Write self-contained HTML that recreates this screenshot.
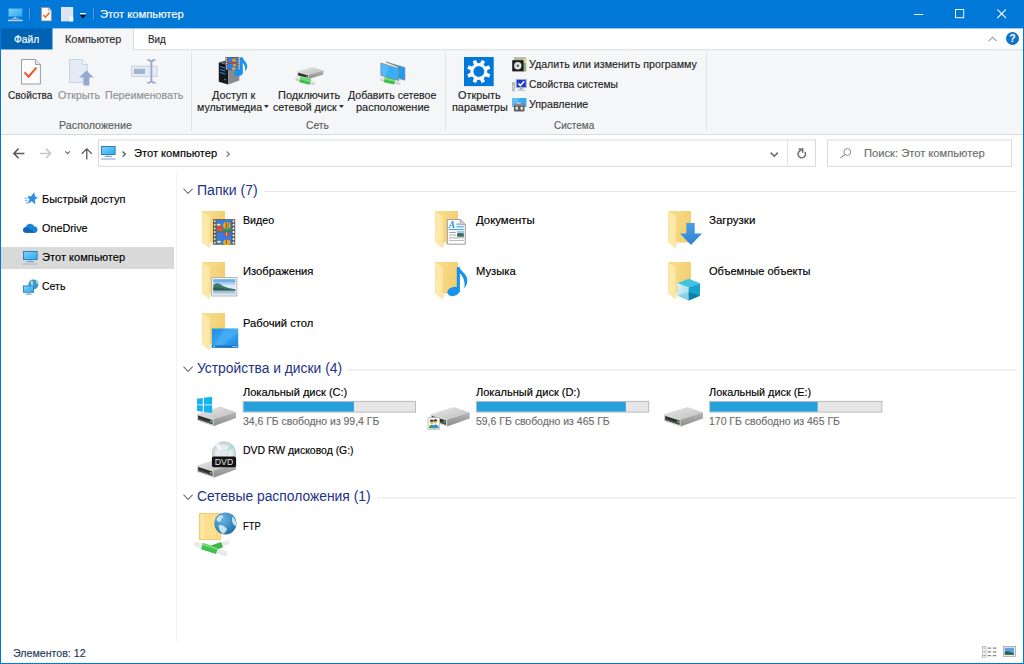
<!DOCTYPE html>
<html lang="ru">
<head>
<meta charset="utf-8">
<title>Этот компьютер</title>
<style>
html,body{margin:0;padding:0;}
body{width:1024px;height:664px;position:relative;overflow:hidden;background:#fff;font-family:"Liberation Sans",sans-serif;font-size:12px;}
.abs{position:absolute;}
.tx{position:absolute;white-space:pre;transform-origin:0 50%;-webkit-text-stroke:0.15px currentColor;}
svg{position:absolute;overflow:visible;}
#win{position:absolute;left:0;top:0;width:1024px;height:664px;box-sizing:border-box;}
#ribbon-bg{position:absolute;left:1px;top:49px;width:1022px;height:86px;background:#f5f6f7;border-bottom:1px solid #dadbdc;box-sizing:border-box;}
#ribbon{position:absolute;left:1px;top:49px;width:1022px;height:86px;}
.rsep{position:absolute;top:3px;width:1px;height:79px;background:#e2e3e4;}
#side-sel{position:absolute;left:1px;top:247px;width:173px;height:22px;background:#d9d9d9;}
#side-div{position:absolute;left:176px;top:173px;width:1px;height:469px;background:#f3f3f5;}
.gline{position:absolute;height:1px;background:#e4e4e4;}
.bar{position:absolute;height:12px;width:174px;box-sizing:border-box;border:1px solid #bcbcbc;background:#e6e6e6;}
.bar i{position:absolute;left:0;top:0;height:10px;background:#26a0da;display:block;}
#bl{position:absolute;left:0;top:28px;width:1px;height:636px;background:#0078d7;}
#br{position:absolute;left:1023px;top:28px;width:1px;height:636px;background:#0078d7;}
#bb{position:absolute;left:0;top:663px;width:1024px;height:1px;background:#0078d7;}
</style>
</head>
<body>
<div id="win">
  <div id="ribbon-bg"></div>
  <svg id="chrome" style="left:0;top:0" width="1024" height="60" viewBox="0 0 1024 60">
    <rect x="1" y="28" width="1022" height="22" fill="#fff"/>
    <rect x="52.5" y="28" width="81" height="23" fill="#f5f6f7"/>
    <rect x="133" y="28.4" width="1" height="21.4" fill="#dadbdc"/>
    <rect x="133" y="49.3" width="890" height="1" fill="#dadbdc"/>
    <rect x="1" y="28" width="51.5" height="21.5" fill="#0063b1"/>
    <rect x="0" y="0" width="1024" height="28.4" fill="#0078d7"/>
  </svg>
  <div id="ribbon">
    <div class="rsep" style="left:190px"></div>
    <div class="rsep" style="left:444px"></div>
    <div class="rsep" style="left:705px"></div>
  </div>
  <svg id="boxes" style="left:0;top:130px" width="1024" height="45" viewBox="0 130 1024 45">
    <rect x="98.5" y="139.9" width="717" height="26.4" fill="#fff" stroke="#d9d9d9" stroke-width="1"/>
    <rect x="787" y="140.4" width="1" height="25.4" fill="#e5e5e5"/>
    <rect x="827.5" y="139.9" width="184" height="26.4" fill="#fff" stroke="#d9d9d9" stroke-width="1"/>
  </svg>
  <div id="side-sel"></div>
  <div id="side-div"></div>
  <svg id="glines" style="left:176px;top:180px" width="848" height="330" viewBox="176 180 848 330">
    <rect x="264" y="190.9" width="753" height="1" fill="#e4e4e4"/>
    <rect x="348" y="369.4" width="669" height="1" fill="#e4e4e4"/>
    <rect x="377" y="497.4" width="640" height="1" fill="#e4e4e4"/>
    <rect x="242.7" y="400.9" width="173.3" height="11.7" fill="#bcbcbc"/><rect x="243.7" y="401.9" width="171.3" height="9.7" fill="#e6e6e6"/><rect x="243.7" y="401.9" width="110.2" height="9.7" fill="#26a0da"/>
    <rect x="475.9" y="400.9" width="173.3" height="11.7" fill="#bcbcbc"/><rect x="476.9" y="401.9" width="171.3" height="9.7" fill="#e6e6e6"/><rect x="476.9" y="401.9" width="148.9" height="9.7" fill="#26a0da"/>
    <rect x="709.1" y="400.9" width="173.3" height="11.7" fill="#bcbcbc"/><rect x="710.1" y="401.9" width="171.3" height="9.7" fill="#e6e6e6"/><rect x="710.1" y="401.9" width="107.5" height="9.7" fill="#26a0da"/>
  </svg>
  <div id="bl"></div><div id="br"></div><div id="bb"></div>
<svg width="0" height="0" style="left:0;top:0"><defs>
<linearGradient id="gFlap" x1="0" y1="0" x2="1" y2="0.25"><stop offset="0" stop-color="#fbe39c"/><stop offset="0.5" stop-color="#fdebae"/><stop offset="1" stop-color="#fbe5a3"/></linearGradient>
<linearGradient id="gBack" x1="0" y1="0" x2="1" y2="0.3"><stop offset="0.3" stop-color="#f7db88"/><stop offset="1" stop-color="#f2ce70"/></linearGradient>
<linearGradient id="gScreen" x1="0" y1="0" x2="1" y2="1"><stop offset="0" stop-color="#7fd4fb"/><stop offset="1" stop-color="#2fa8ec"/></linearGradient>
<linearGradient id="gDesk" x1="0" y1="0" x2="1" y2="1"><stop offset="0" stop-color="#1b8fe6"/><stop offset="0.5" stop-color="#3aa6f0"/><stop offset="1" stop-color="#1687df"/></linearGradient>
<linearGradient id="gDrvTop" x1="0" y1="0" x2="1" y2="1"><stop offset="0" stop-color="#e9e9e9"/><stop offset="1" stop-color="#bdbdbd"/></linearGradient>
<linearGradient id="gDrvSide" x1="0" y1="0" x2="0" y2="1"><stop offset="0" stop-color="#b5b5b5"/><stop offset="1" stop-color="#8d8d8d"/></linearGradient>
<linearGradient id="gGreen" x1="0" y1="0" x2="0" y2="1"><stop offset="0" stop-color="#7fe07a"/><stop offset="1" stop-color="#2fa53a"/></linearGradient>
<radialGradient id="gGlobe" cx="0.35" cy="0.3" r="0.8"><stop offset="0" stop-color="#6db6e6"/><stop offset="1" stop-color="#1d6aa5"/></radialGradient>
<radialGradient id="gDisc" cx="0.5" cy="0.5" r="0.5"><stop offset="0" stop-color="#ffffff"/><stop offset="0.6" stop-color="#e8ecef"/><stop offset="1" stop-color="#c9ced3"/></radialGradient>
<linearGradient id="gCubeL" x1="0" y1="0" x2="1" y2="1"><stop offset="0" stop-color="#d8f3fa"/><stop offset="1" stop-color="#9adbea"/></linearGradient>
<linearGradient id="gArrow" x1="0" y1="0" x2="0" y2="1"><stop offset="0" stop-color="#4b9ee8"/><stop offset="1" stop-color="#2b84d6"/></linearGradient>
</defs></svg>
<svg style="left:201.8px;top:211px" width="36" height="38" viewBox="0 0 36 38"><rect x="0" y="0" width="23" height="31.5" fill="url(#gBack)"/><polygon points="0,0 7.8,5.6 7.8,37.5 0,31.6" fill="url(#gFlap)"/><polygon points="7.8,31.5 12,31.5 7.8,36" fill="#e9e4d4" opacity="0.7"/><g transform="translate(11,8.2)"><rect x="0" y="0" width="22.2" height="25.5" fill="#4d4d4d"/><rect x="3.4" y="0.8" width="15.2" height="11.6" fill="#3b7bdc"/><rect x="3.4" y="13.1" width="15.2" height="11.6" fill="#3b7bdc"/><rect x="0.8" y="1.00" width="1.8" height="2.2" fill="#e8d9a0"/><rect x="19.6" y="1.00" width="1.8" height="2.2" fill="#f2f2f2"/><rect x="0.8" y="4.55" width="1.8" height="2.2" fill="#e8d9a0"/><rect x="19.6" y="4.55" width="1.8" height="2.2" fill="#f2f2f2"/><rect x="0.8" y="8.10" width="1.8" height="2.2" fill="#e8d9a0"/><rect x="19.6" y="8.10" width="1.8" height="2.2" fill="#f2f2f2"/><rect x="0.8" y="11.65" width="1.8" height="2.2" fill="#e8d9a0"/><rect x="19.6" y="11.65" width="1.8" height="2.2" fill="#f2f2f2"/><rect x="0.8" y="15.20" width="1.8" height="2.2" fill="#e8d9a0"/><rect x="19.6" y="15.20" width="1.8" height="2.2" fill="#f2f2f2"/><rect x="0.8" y="18.75" width="1.8" height="2.2" fill="#e8d9a0"/><rect x="19.6" y="18.75" width="1.8" height="2.2" fill="#f2f2f2"/><rect x="0.8" y="22.30" width="1.8" height="2.2" fill="#e8d9a0"/><rect x="19.6" y="22.30" width="1.8" height="2.2" fill="#f2f2f2"/><ellipse cx="13.8" cy="6.2" rx="3.6" ry="3.3" fill="#e8b21e"/><rect x="12.6" y="3.2" width="1.1" height="6" fill="#c8351e"/><rect x="14.6" y="3.4" width="1" height="5.6" fill="#3b8a2e"/><ellipse cx="6.6" cy="8.2" rx="2.6" ry="2.4" fill="#d8482a"/><rect x="4" y="9.6" width="6" height="2.6" fill="#d45a30"/><rect x="10" y="10" width="8.4" height="2.2" fill="#2f9a3a"/><ellipse cx="5.6" cy="5.6" rx="2" ry="1" fill="#f1e08a"/><polygon points="10.6,13.2 17.4,13.2 14,18.2" fill="#c83a5a"/><rect x="13" y="13.2" width="1.2" height="3.4" fill="#e8c21e"/><ellipse cx="13.8" cy="23.2" rx="3.6" ry="2.6" fill="#e8b21e"/><rect x="12.8" y="21" width="1.1" height="3.7" fill="#c8351e"/><ellipse cx="6" cy="22.6" rx="2.2" ry="1.1" fill="#f1e08a"/></g></svg>
<svg style="left:201.8px;top:262px" width="36" height="38" viewBox="0 0 36 38"><rect x="0" y="0" width="23" height="31.5" fill="url(#gBack)"/><polygon points="0,0 7.8,5.6 7.8,37.5 0,31.6" fill="url(#gFlap)"/><polygon points="7.8,31.5 12,31.5 7.8,36" fill="#e9e4d4" opacity="0.7"/><g transform="translate(9.3,15.2)"><rect x="0.4" y="0.4" width="25.2" height="18.4" fill="#f6f6f6" stroke="#a6a6a6" stroke-width="0.8"/><rect x="2" y="2" width="22" height="15" fill="#dcebf6"/><rect x="2" y="2" width="22" height="3.4" fill="#6fb0ea"/><rect x="2" y="5.4" width="22" height="2" fill="#a9d2f2"/><path d="M2 7.6 C4.4 5.6 7 5.4 9 7 C12 9.4 15.6 10.6 24 12 L24 13.6 L2 13.6 Z" fill="#3f7a62"/><path d="M2 10.6 C6 9.6 12 11.4 24 12.6 L24 13.6 L2 13.6 Z" fill="#2d5f52"/><rect x="2" y="13.4" width="22" height="3.6" fill="#9dbedb"/><rect x="2" y="15.6" width="22" height="1.4" fill="#c4d8ea"/></g></svg>
<svg style="left:201.8px;top:313.3px" width="36" height="38" viewBox="0 0 36 38"><rect x="0" y="0" width="23" height="31.5" fill="url(#gBack)"/><polygon points="0,0 7.8,5.6 7.8,37.5 0,31.6" fill="url(#gFlap)"/><polygon points="7.8,31.5 12,31.5 7.8,36" fill="#e9e4d4" opacity="0.7"/><g transform="translate(9.8,15.5)"><rect x="0" y="0" width="26.4" height="19.2" fill="url(#gDesk)"/><polygon points="12,0 26.4,0 26.4,4 8,19.2 2,19.2" fill="#5bbaf6" opacity="0.35"/><rect x="0" y="17" width="26.4" height="2.2" fill="#1a6fbf"/><rect x="1.4" y="17.7" width="1.6" height="0.9" fill="#e8f3fb"/><rect x="20.5" y="17.7" width="1.3" height="0.9" fill="#e8f3fb"/><rect x="22.4" y="17.7" width="1.3" height="0.9" fill="#e8f3fb"/><rect x="24.3" y="17.7" width="1.3" height="0.9" fill="#e8f3fb"/></g></svg>
<svg style="left:435.1px;top:211px" width="36" height="38" viewBox="0 0 36 38"><rect x="0" y="0" width="23" height="31.5" fill="url(#gBack)"/><polygon points="0,0 7.8,5.6 7.8,37.5 0,31.6" fill="url(#gFlap)"/><polygon points="7.8,31.5 12,31.5 7.8,36" fill="#e9e4d4" opacity="0.7"/><g transform="translate(11.9,8.2)"><path d="M0.4 0.4 L13.4 0.4 L18.4 5.4 L18.4 25 L0.4 25 Z" fill="#fdfdfd" stroke="#8f9296" stroke-width="0.9"/><path d="M13.4 0.4 L13.4 5.4 L18.4 5.4 Z" fill="#d4d8dc" stroke="#8f9296" stroke-width="0.7"/><text x="1.8" y="8.6" font-family="Liberation Serif,serif" font-style="italic" font-weight="bold" font-size="9.4" fill="#2b8ee0">A</text><rect x="9.4" y="4.4" width="3.6" height="1.1" fill="#4aa8ec"/><rect x="9.4" y="6.8" width="7.6" height="1.5" fill="#6dbbf0"/><rect x="1.8" y="9.9" width="15.2" height="1" fill="#3b9ee8"/><rect x="2.2" y="12.8" width="6.8" height="0.9" fill="#9a9a9a"/><rect x="2.2" y="15.4" width="6.8" height="0.9" fill="#a4a4a4"/><rect x="2.2" y="18" width="14.8" height="1.2" fill="#b9b9b9"/><rect x="2.2" y="20.8" width="14.8" height="1" fill="#b9b9b9"/><rect x="10.2" y="12" width="6.8" height="5.4" fill="#4f86a8"/><rect x="10.2" y="12" width="6.8" height="1.8" fill="#a8d4f0"/><path d="M10.2 15.2 L13 13.6 L17 16 L17 17.4 L10.2 17.4 Z" fill="#3f6f52"/></g></svg>
<svg style="left:435.1px;top:262px" width="36" height="38" viewBox="0 0 36 38"><rect x="0" y="0" width="23" height="31.5" fill="url(#gBack)"/><polygon points="0,0 7.8,5.6 7.8,37.5 0,31.6" fill="url(#gFlap)"/><polygon points="7.8,31.5 12,31.5 7.8,36" fill="#e9e4d4" opacity="0.7"/><path d="M21.8 5.4 L24.3 4.6 C25.2 9.6 32.3 11.6 32.3 18.6 C32.3 21.6 31 24.6 29.2 26.6 C30.2 22 29.4 15.4 24.9 11.4 L24.9 30 L21.8 30 Z" fill="#1793ea"/><ellipse cx="18.4" cy="29.5" rx="6.2" ry="4.5" fill="#1793ea" transform="rotate(-14 18.4 29.5)"/></svg>
<svg style="left:668.4px;top:211px" width="36" height="38" viewBox="0 0 36 38"><rect x="0" y="0" width="23" height="31.5" fill="url(#gBack)"/><polygon points="0,0 7.8,5.6 7.8,37.5 0,31.6" fill="url(#gFlap)"/><polygon points="7.8,31.5 12,31.5 7.8,36" fill="#e9e4d4" opacity="0.7"/><g transform="translate(12,12.1)"><path d="M6.4 0 L14.7 0 L14.7 10.5 L22 10.5 L11 21.8 L0 10.5 L6.4 10.5 Z" fill="url(#gArrow)"/></g></svg>
<svg style="left:668.4px;top:262px" width="36" height="38" viewBox="0 0 36 38"><rect x="0" y="0" width="23" height="31.5" fill="url(#gBack)"/><polygon points="0,0 7.8,5.6 7.8,37.5 0,31.6" fill="url(#gFlap)"/><polygon points="7.8,31.5 12,31.5 7.8,36" fill="#e9e4d4" opacity="0.7"/><g transform="translate(9.4,16.8) scale(1.027,0.99)"><polygon points="11,0 22,4.4 11,8.8 0,4.4" fill="#3fc3e4"/><polygon points="0,4.4 11,8.8 11,22 0,17.2" fill="url(#gCubeL)"/><polygon points="22,4.4 11,8.8 11,22 22,17.2" fill="#16a3cf"/><polygon points="0,17.2 11,13.4 11,22" fill="#7ccfe0" opacity="0.8"/><polygon points="22,17.2 11,13.4 11,22" fill="#0f7fa5"/></g></svg>
<svg style="left:197px;top:397px" width="40" height="36" viewBox="0 0 40 36"><g transform="translate(0,9.6)"><polygon points="0,7.3 23.4,0 39,5.6 16.5,12.5" fill="url(#gDrvTop)"/><polygon points="0,7.3 16.5,12.5 16.5,19.6 0,13.9" fill="#cfcfcf"/><polygon points="1.2,8.9 15.4,13.4 15.4,17.7 1.2,12.9" fill="#2e2e2e"/><polygon points="1.2,11.6 15.4,16.2 15.4,17.7 1.2,12.9" fill="#555"/><polygon points="16.5,12.5 39,5.6 39,11.4 16.5,19.6" fill="url(#gDrvSide)"/><polygon points="12.8,13.6 14.8,14.2 14.8,15.8 12.8,15.2" fill="#3fe05a"/></g><g transform="translate(0,0)"><g fill="#12b5f0"><polygon points="0,1.8 5.8,1 5.8,7.4 0,7.4"/><polygon points="7,0.8 15.1,-0.3 15.1,7.4 7,7.4"/><polygon points="0,8.3 5.8,8.3 5.8,14.7 0,13.9"/><polygon points="7,8.3 15.1,8.3 15.1,15.9 7,14.9"/></g></g></svg>
<svg style="left:427.7px;top:406.5px" width="42" height="24" viewBox="0 0 42 24"><g transform="translate(2.6,0)"><polygon points="0,7.3 23.4,0 39,5.6 16.5,12.5" fill="url(#gDrvTop)"/><polygon points="0,7.3 16.5,12.5 16.5,19.6 0,13.9" fill="#cfcfcf"/><polygon points="1.2,8.9 15.4,13.4 15.4,17.7 1.2,12.9" fill="#2e2e2e"/><polygon points="1.2,11.6 15.4,16.2 15.4,17.7 1.2,12.9" fill="#555"/><polygon points="16.5,12.5 39,5.6 39,11.4 16.5,19.6" fill="url(#gDrvSide)"/><polygon points="12.8,13.6 14.8,14.2 14.8,15.8 12.8,15.2" fill="#3fe05a"/></g><g transform="translate(0,10.7)"><rect x="0" y="0" width="11.6" height="11.6" fill="#fbfbfb" stroke="#b9b9b9" stroke-width="0.8"/><circle cx="3.8" cy="4.2" r="1.9" fill="#d9b36a"/><path d="M1.9 3.8 A1.9 1.9 0 0 1 5.7 3.8 Z" fill="#3a2e22"/><path d="M0.9 10.6 C0.9 5.8 6.7 5.8 6.9 10.6 Z" fill="#3f9a4a"/><circle cx="7.4" cy="3.9" r="1.9" fill="#e1bb72"/><path d="M5.5 3.5 A1.9 1.9 0 0 1 9.3 3.5 Z" fill="#2a2a30"/><path d="M4.8 10.6 C4.8 5.6 10.6 5.6 10.8 10.6 Z" fill="#2f8fd8"/></g></svg>
<svg style="left:663.6px;top:406.5px" width="40" height="22" viewBox="0 0 40 22"><polygon points="0,7.3 23.4,0 39,5.6 16.5,12.5" fill="url(#gDrvTop)"/><polygon points="0,7.3 16.5,12.5 16.5,19.6 0,13.9" fill="#cfcfcf"/><polygon points="1.2,8.9 15.4,13.4 15.4,17.7 1.2,12.9" fill="#2e2e2e"/><polygon points="1.2,11.6 15.4,16.2 15.4,17.7 1.2,12.9" fill="#555"/><polygon points="16.5,12.5 39,5.6 39,11.4 16.5,19.6" fill="url(#gDrvSide)"/><polygon points="12.8,13.6 14.8,14.2 14.8,15.8 12.8,15.2" fill="#3fe05a"/></svg>
<svg style="left:197px;top:441px" width="40" height="38" viewBox="0 0 40 38"><g transform="translate(0,17.1)"><polygon points="0,7.3 23.4,0 39,5.6 16.5,12.5" fill="url(#gDrvTop)"/><polygon points="0,7.3 16.5,12.5 16.5,19.6 0,13.9" fill="#cfcfcf"/><polygon points="1.2,8.9 15.4,13.4 15.4,17.7 1.2,12.9" fill="#2e2e2e"/><polygon points="1.2,11.6 15.4,16.2 15.4,17.7 1.2,12.9" fill="#555"/><polygon points="16.5,12.5 39,5.6 39,11.4 16.5,19.6" fill="url(#gDrvSide)"/><polygon points="12.8,13.6 14.8,14.2 14.8,15.8 12.8,15.2" fill="#3fe05a"/></g><g transform="translate(15,0.5)"><clipPath id="cDisc"><rect x="0" y="-1" width="26" height="16.4"/></clipPath><g clip-path="url(#cDisc)"><circle cx="11.9" cy="12" r="11.8" fill="url(#gDisc)" stroke="#b4b9be" stroke-width="0.6"/><path d="M11.9 12 L19.6 2.6 A12 12 0 0 1 22.4 5.8 Z" fill="#8fe6e0" opacity="0.8"/><path d="M11.9 12 L3 4 A12 12 0 0 1 7 1.2 Z" fill="#ffffff" opacity="0.7"/><circle cx="11.9" cy="12" r="4.1" fill="#eceff2" stroke="#bfc4c9" stroke-width="0.6"/><circle cx="11.9" cy="12" r="1.5" fill="#fff" stroke="#b0b4b8" stroke-width="0.5"/></g></g><g transform="translate(14.9,15.4)"><rect x="0" y="0" width="24.2" height="10.8" rx="1.6" fill="#141414"/><text x="12.1" y="8.9" text-anchor="middle" font-family="Liberation Sans,sans-serif" font-size="9.6" fill="#e2e2e2" textLength="18.4" lengthAdjust="spacingAndGlyphs">DVD</text></g></svg>
<svg style="left:198.9px;top:513.2px" width="44" height="46" viewBox="0 0 44 46"><rect x="0.4" y="0.4" width="21.2" height="26.2" fill="#fbdf8c" stroke="#efc75e" stroke-width="0.8"/><rect x="2.2" y="1.6" width="0.7" height="24" fill="#fff3c9"/><rect x="3.8" y="1.6" width="0.7" height="24" fill="#fff3c9"/><rect x="17.4" y="1.6" width="0.8" height="24" fill="#f3cf6c"/><circle cx="26.4" cy="10.4" r="11" fill="url(#gGlobe)"/><path d="M17.4 6.4 C18.6 3.6 21 2 23.6 2.2 C25 3 24 4.6 22.6 5.4 C21.4 6.2 22.6 7.6 21.4 8.4 C20 9.2 18.4 8.4 17.4 6.4 Z" fill="#d4ecf5" opacity="0.9"/><path d="M19.4 12.4 C21.6 11.2 25 12.2 26.6 14.4 C28.4 15 28.2 17 26.8 18.2 C26 19.8 24.6 21 23 20.6 C21.6 18.6 19.6 16 19.4 12.4 Z" fill="#d4ecf5" opacity="0.9"/><path d="M33.4 3.6 C35.4 5 37 7.6 37.2 10.4 C37 12.4 36.2 13.4 35.2 12.4 C33.8 10.6 32.8 8.6 33 6.4 Z" fill="#d4ecf5" opacity="0.9"/><g stroke-linecap="round" fill="none"><path d="M-2.4 31.4 L26 40.4" stroke="#e9e9e9" stroke-width="5"/><path d="M14 34.6 L28.4 29.6" stroke="#e9e9e9" stroke-width="4"/></g><g stroke-linecap="butt" fill="none"><path d="M13.6 35 L23 31.6" stroke="#3fb548" stroke-width="5.6"/><path d="M3 33.1 L18 37.9" stroke="#43c04e" stroke-width="6.6"/><path d="M3.4 31.2 L18.4 36" stroke="#7fe07a" stroke-width="1.6"/></g></svg>
<svg style="left:183.2px;top:187.6px" width="11" height="7" viewBox="0 0 11 7"><path d="M0.5 0.6 L5.1 5.4 L9.7 0.6" fill="none" stroke="#767676" stroke-width="1.1"/></svg>
<svg style="left:183.2px;top:366.4px" width="11" height="7" viewBox="0 0 11 7"><path d="M0.5 0.6 L5.1 5.4 L9.7 0.6" fill="none" stroke="#767676" stroke-width="1.1"/></svg>
<svg style="left:183.2px;top:493.6px" width="11" height="7" viewBox="0 0 11 7"><path d="M0.5 0.6 L5.1 5.4 L9.7 0.6" fill="none" stroke="#767676" stroke-width="1.1"/></svg>
<svg style="left:24.4px;top:192.4px" width="14" height="13" viewBox="0 0 14 13"><path d="M7.4 0.4 L8.6 4 L11 4.4 L8.8 6.6 L9.8 10.6 L6.4 8.4 L3.4 10.8 L4.2 7 L1.8 4.8 L5.2 4.2 Z" fill="#2f8ee6" transform="translate(0.6,-0.6) scale(1.18) rotate(8 6 6)"/><path d="M0.4 6.2 L3.4 7 M0.8 8.6 L3.8 9 M1.8 11 L4.6 10.8" stroke="#6db3f0" stroke-width="1" fill="none"/></svg>
<svg style="left:22.8px;top:223.2px" width="14.6" height="9.8" viewBox="0 0 15.6 10.6"><path d="M3.2 10.6 C1.2 10.6 0 9.2 0 7.6 C0 6 1.2 4.8 2.8 4.6 C3.4 2.2 5.4 0.8 7.6 0.8 C9.6 0.8 11.2 1.8 12 3.6 C14 3.6 15.6 5.2 15.6 7.2 C15.6 9.2 14.2 10.6 12.4 10.6 Z" fill="#1a86d8"/><path d="M3.2 10.6 C1.2 10.6 0 9.2 0 7.6 C0 6 1.2 4.8 2.8 4.6 C5.6 5 9.6 6.6 12.6 10.6 Z" fill="#0f64b4"/></svg>
<svg style="left:23px;top:251.1px" width="16" height="14" viewBox="0 0 16 14"><rect x="0.5" y="0.5" width="13.6" height="8" fill="url(#gScreen)" stroke="#2a80c2" stroke-width="1"/><rect x="3.5999999999999996" y="10.3" width="7.4" height="0.8" fill="#4b83b0"/><rect x="6.3" y="9" width="2" height="1.3" fill="#9fc0da"/><rect x="0" y="12.2" width="14.6" height="1.6" fill="#b5c5d5"/></svg>
<svg style="left:22.8px;top:278.6px" width="16" height="17" viewBox="0 0 16 17"><circle cx="10.4" cy="5.4" r="5" fill="#3f94cc"/><path d="M7.4 2 C9.4 1.2 10.6 2.8 9.8 4.4 C9.4 5.6 11.4 6.2 11 7.8 L8.4 7.8 Z" fill="#a9dcee"/><path d="M12.6 1.6 C14 2.6 15 4 15 5.8 C14 5.4 13 4.2 12.6 1.6 Z" fill="#a9dcee"/><rect x="0.5" y="6.9" width="10" height="6.4" fill="url(#gScreen)" stroke="#2a80c2" stroke-width="0.9"/><rect x="4" y="13.6" width="3.2" height="1.2" fill="#9fb6c6"/><rect x="2.4" y="14.8" width="6.4" height="0.9" fill="#8aa2b4"/></svg>
<svg style="left:12.6px;top:148px" width="12" height="11" viewBox="0 0 12 11"><path d="M5.6 0.6 L0.8 5.4 L5.6 10.2 M0.8 5.4 L11.4 5.4" fill="none" stroke="#5a5a5a" stroke-width="1.5"/></svg>
<svg style="left:40px;top:148px" width="12" height="11" viewBox="0 0 12 11"><path d="M5.8 0.6 L10.6 5.4 L5.8 10.2 M10.6 5.4 L0 5.4" fill="none" stroke="#c6c6c6" stroke-width="1.5"/></svg>
<svg style="left:64.8px;top:151px" width="6" height="4" viewBox="0 0 6 4"><path d="M0.4 0.4 L2.6 2.6 L4.8 0.4" fill="none" stroke="#6a6a6a" stroke-width="1.2"/></svg>
<svg style="left:80.6px;top:147.6px" width="12" height="12" viewBox="0 0 12 12"><path d="M0.8 5.8 L5.8 0.9 L10.8 5.8 M5.8 0.9 L5.8 11.6" fill="none" stroke="#5a5a5a" stroke-width="1.3"/></svg>
<svg style="left:101.1px;top:145.9px" width="16" height="14" viewBox="0 0 16 14"><rect x="0.5" y="0.5" width="13.6" height="8" fill="url(#gScreen)" stroke="#2a80c2" stroke-width="1"/><rect x="3.5999999999999996" y="10.3" width="7.4" height="0.8" fill="#4b83b0"/><rect x="6.3" y="9" width="2" height="1.3" fill="#9fc0da"/><rect x="0" y="12.2" width="14.6" height="1.6" fill="#b5c5d5"/></svg>
<svg style="left:122.4px;top:150.6px" width="4" height="7" viewBox="0 0 4 7"><path d="M0.6 0.5 L3.3 3.1 L0.6 5.7" fill="none" stroke="#6a6a6a" stroke-width="1.5"/></svg>
<svg style="left:226.2px;top:150.6px" width="4" height="7" viewBox="0 0 4 7"><path d="M0.6 0.5 L3.3 3.1 L0.6 5.7" fill="none" stroke="#8a8a8a" stroke-width="1.4"/></svg>
<svg style="left:770px;top:152px" width="9" height="6" viewBox="0 0 9 6"><path d="M0.7 0.6 L4.25 4.2 L7.8 0.6" fill="none" stroke="#6a6a6a" stroke-width="1.6"/></svg>
<svg style="left:796px;top:146px" width="12" height="14" viewBox="0 0 12 14"><path d="M8.87 5.85 A3.75 3.75 0 1 1 5.67 4.25" fill="none" stroke="#6a6a6a" stroke-width="1.5"/><path d="M2.6 3.1 L6.7 3.1 L6.7 6.8" fill="none" stroke="#6a6a6a" stroke-width="1.5"/></svg>
<svg style="left:840.2px;top:148px" width="12" height="11" viewBox="0 0 12 11"><circle cx="7.3" cy="4" r="3.4" fill="none" stroke="#8c8c8c" stroke-width="1"/><path d="M4.8 6.5 L0.5 10.2" stroke="#8c8c8c" stroke-width="1.1"/></svg>
<svg style="left:8.3px;top:7.6px" width="16" height="14" viewBox="0 0 16 14"><rect x="0.5" y="0.5" width="13.6" height="8" fill="url(#gScreen)" stroke="#3b93d8" stroke-width="0.8"/><rect x="6.3" y="9" width="2" height="1.4" fill="#bcd6ea"/><rect x="3.6" y="10.2" width="7.4" height="0.8" fill="#8fc0e6"/><rect x="0" y="11.6" width="14.6" height="1.6" fill="#c3d3e0"/></svg>
<svg style="left:28.8px;top:8.3px" width="2" height="11.4" viewBox="0 0 2 11.4"><rect x="0" width="1" height="11.4" fill="#4d9fe3"/><rect x="1" width="1" height="11.4" fill="#1568b8"/></svg>
<svg style="left:40.5px;top:7.3px" width="11" height="14.4" viewBox="0 0 11 14.4"><path d="M0.4 0.4 L7.4 0.4 L10.4 3.4 L10.4 13.9 L0.4 13.9 Z" fill="#fbfbfb" stroke="#9a8f88" stroke-width="0.8"/><path d="M7.4 0.4 L7.4 3.4 L10.4 3.4" fill="#e4e4e4" stroke="#9a8f88" stroke-width="0.6"/><path d="M2.2 8 L4.4 10.2 L8.6 5.4" fill="none" stroke="#f0622f" stroke-width="1.5"/></svg>
<svg style="left:60.6px;top:7.3px" width="12.4" height="14.4" viewBox="0 0 12.4 14.4"><rect x="0" y="0" width="12.2" height="14.4" fill="#dbe5f3"/><rect x="8.6" y="9.4" width="3.6" height="5" fill="#f2f6fb"/></svg>
<svg style="left:80px;top:12.7px" width="7" height="6" viewBox="0 0 7 6"><rect x="0" y="0" width="6" height="1.2" fill="#fff"/><path d="M0 2 L6 2 L3 5.6 Z" fill="#0a0a0a"/></svg>
<svg style="left:92.9px;top:8.3px" width="2" height="11.4" viewBox="0 0 2 11.4"><rect x="0" width="1" height="11.4" fill="#4d9fe3"/><rect x="1" width="1" height="11.4" fill="#1568b8"/></svg>
<svg style="left:914px;top:14px" width="10" height="1" viewBox="0 0 10 1"><rect width="9.2" height="1" fill="#f2f8fd"/></svg>
<svg style="left:955.4px;top:9.2px" width="10" height="10" viewBox="0 0 10 10"><rect x="0.5" y="0.5" width="8.2" height="8.2" fill="none" stroke="#f2f8fd" stroke-width="1"/></svg>
<svg style="left:997.4px;top:9.2px" width="10" height="10" viewBox="0 0 10 10"><path d="M0.3 0.3 L9 9 M9 0.3 L0.3 9" stroke="#f2f8fd" stroke-width="1.1"/></svg>
<svg style="left:988.4px;top:36.2px" width="10" height="6" viewBox="0 0 10 6"><path d="M0.6 5.2 L4.6 1.2 L8.6 5.2" fill="none" stroke="#9a9a9a" stroke-width="1.1"/></svg>
<svg style="left:1006.2px;top:32.2px" width="13" height="13" viewBox="0 0 13 13"><circle cx="6.5" cy="6.5" r="6.5" fill="#1173c8"/><text x="6.5" y="10.4" text-anchor="middle" font-family="Liberation Sans,sans-serif" font-weight="bold" font-size="10.5" fill="#fff">?</text></svg>
<svg style="left:21px;top:58.6px" width="20" height="26" viewBox="0 0 20 26"><path d="M0.5 0.5 L14.4 0.5 L19.4 5.5 L19.4 25 L0.5 25 Z" fill="#fcfcfc" stroke="#8e9296" stroke-width="0.9"/><path d="M14.4 0.5 L14.4 5.5 L19.4 5.5" fill="#e6e6e6" stroke="#8e9296" stroke-width="0.8"/><path d="M3.6 13.4 L7.6 17.6 L15.4 8.6" fill="none" stroke="#f0562a" stroke-width="2.1"/></svg>
<svg style="left:68.6px;top:58.6px" width="25" height="28" viewBox="0 0 25 28"><path d="M0.5 0.5 L13.4 0.5 L18.4 5.5 L18.4 23.6 L0.5 23.6 Z" fill="#e3ebf6" stroke="#c3d0e2" stroke-width="0.9"/><path d="M13.4 0.5 L13.4 5.5 L18.4 5.5" fill="#f2f6fb" stroke="#c3d0e2" stroke-width="0.8"/><path d="M17.4 11.4 L24.6 18.6 L20.4 18.6 L20.4 26.6 L14.4 26.6 L14.4 18.6 L10.2 18.6 Z" fill="#96a9cb"/></svg>
<svg style="left:131px;top:58.8px" width="27" height="25" viewBox="0 0 27 25"><rect x="0.5" y="7.2" width="25.6" height="10.4" fill="#e3ebf6" stroke="#c3d0e2" stroke-width="0.9"/><rect x="3" y="9.8" width="11" height="5.2" fill="#a3b4cf"/><path d="M16.4 0.8 C18.6 0.8 19.8 1.6 20.4 2.8 C21 1.6 22.2 0.8 24.4 0.8 M16.4 24 C18.6 24 19.8 23.2 20.4 22 C21 23.2 22.2 24 24.4 24 M20.4 2.8 L20.4 22" fill="none" stroke="#96a9cb" stroke-width="1.8"/></svg>
<svg style="left:218.4px;top:56px" width="30" height="29" viewBox="0 0 30 29"><polygon points="0.8,6.3 10.2,9.2 10.2,28.6 0.8,25.7" fill="#161616"/><polygon points="10.2,9.2 21.3,6 21.3,24.5 10.2,28.6" fill="#8a8a8a"/><polygon points="0.8,6.3 8,4.4 21.3,6 10.2,9.2" fill="#5a5a5a"/><g fill="#2a8fe0"><polygon points="2,10 7.4,11.6 7.4,12.6 2,11"/><polygon points="2,13 7.4,14.6 7.4,15.6 2,14"/><polygon points="2,16 7.4,17.6 7.4,18.6 2,17"/><polygon points="6.4,22.6 8,23.1 8,24.5 6.4,24"/></g><g transform="translate(7.5,1)"><rect x="0" y="0" width="13.8" height="13.3" fill="#565656"/><rect x="2.2" y="0.6" width="9.2" height="5.8" fill="#3b7bdc"/><rect x="2.2" y="7" width="9.2" height="5.8" fill="#3b7bdc"/><circle cx="8.6" cy="3.4" r="1.9" fill="#e0a81e"/><rect x="3" y="4.6" width="7" height="1.6" fill="#c8463a"/><circle cx="9" cy="8" r="1.5" fill="#d2a62a"/><circle cx="8.2" cy="11.8" r="1.6" fill="#e0b81e"/><rect x="0.5" y="0.8" width="1.1" height="1.4" fill="#e2e2e2"/><rect x="12.1" y="0.8" width="1.1" height="1.4" fill="#e2e2e2"/><rect x="0.5" y="3.3" width="1.1" height="1.4" fill="#e2e2e2"/><rect x="12.1" y="3.3" width="1.1" height="1.4" fill="#e2e2e2"/><rect x="0.5" y="5.8" width="1.1" height="1.4" fill="#e2e2e2"/><rect x="12.1" y="5.8" width="1.1" height="1.4" fill="#e2e2e2"/><rect x="0.5" y="8.3" width="1.1" height="1.4" fill="#e2e2e2"/><rect x="12.1" y="8.3" width="1.1" height="1.4" fill="#e2e2e2"/><rect x="0.5" y="10.8" width="1.1" height="1.4" fill="#e2e2e2"/><rect x="12.1" y="10.8" width="1.1" height="1.4" fill="#e2e2e2"/></g><path d="M21.9 1.6 L24.4 1 C25.4 4.6 29.2 6 29.2 10.6 C29.2 12.4 28.4 14 26.9 15.2 C27.6 12.6 27 9 24.8 6.8 L24.8 17 L21.9 17 Z" fill="#1b93ea"/><ellipse cx="20.3" cy="16.7" rx="4.7" ry="3.6" fill="#1b93ea" transform="rotate(-12 20.3 16.7)"/></svg>
<svg style="left:294px;top:66px" width="32" height="21" viewBox="0 0 32 21"><g transform="translate(3.3,1)"><polygon points="0,4.6 15.2,0 26,3.4 11.7,7.7" fill="url(#gDrvTop)"/><polygon points="0,4.6 11.7,7.7 11.7,12 0,9.2" fill="#cfcfcf"/><polygon points="0.9,5.8 10.9,8.5 10.9,10.8 0.9,8.4" fill="#2e2e2e"/><polygon points="11.7,7.7 26,3.4 26,7.5 11.7,12" fill="url(#gDrvSide)"/><polygon points="8.6,8.7 10.3,9.2 10.3,10.3 8.6,9.8" fill="#3fe05a"/></g><path d="M2.6 12.7 L19.6 17" stroke="#e4e4e4" stroke-width="4" stroke-linecap="round" fill="none"/><path d="M2.6 13.799999999999999 L19.6 18.1" stroke="#c9c9c9" stroke-width="1.40" stroke-linecap="round" fill="none"/><path d="M6.00 13.56 L16.20 16.14" stroke="#3fbf4d" stroke-width="5.4" fill="none"/><path d="M6.00 12.37 L16.20 14.95" stroke="#74e07a" stroke-width="1.94" fill="none"/></svg>
<svg style="left:380.3px;top:61.4px" width="26" height="25" viewBox="0 0 26 25"><polygon points="6,0.9 24.9,6.6 24.9,19.2 18,17.2 18,6" fill="#1f9cf0" stroke="#8a8078" stroke-width="0.6"/><path d="M1.4 18 L19 21.8" stroke="#e4e4e4" stroke-width="4" stroke-linecap="round" fill="none"/><path d="M1.4 19.1 L19 22.900000000000002" stroke="#c9c9c9" stroke-width="1.40" stroke-linecap="round" fill="none"/><path d="M4.39 18.65 L14.60 20.85" stroke="#3fbf4d" stroke-width="5.2" fill="none"/><path d="M4.39 17.50 L14.60 19.71" stroke="#74e07a" stroke-width="1.87" fill="none"/><polygon points="0.85,2 19.4,8 18.6,19.5 0.85,14.3" fill="#37aefa" stroke="#857c74" stroke-width="0.7"/><polygon points="1.4,2.8 9,5.2 6,15.2 1.4,13.8" fill="#66c4ff" opacity="0.6"/></svg>
<svg style="left:464.1px;top:56.9px" width="30" height="30" viewBox="0 0 30 30"><rect width="29.7" height="29.1" fill="#0078d7"/><path d="M17.83 3.41 L20.50 4.51 L19.30 7.77 L21.53 10.00 L24.79 8.80 L25.89 11.47 L22.74 12.92 L22.74 16.08 L25.89 17.53 L24.79 20.20 L21.53 19.00 L19.30 21.23 L20.50 24.49 L17.83 25.59 L16.38 22.44 L13.22 22.44 L11.77 25.59 L9.10 24.49 L10.30 21.23 L8.07 19.00 L4.81 20.20 L3.71 17.53 L6.86 16.08 L6.86 12.92 L3.71 11.47 L4.81 8.80 L8.07 10.00 L10.30 7.77 L9.10 4.51 L11.77 3.41 L13.22 6.56 L16.38 6.56 Z M20.60 14.50 A5.8 5.8 0 1 0 9.00 14.50 A5.8 5.8 0 1 0 20.60 14.50 Z" fill="#fff" fill-rule="evenodd" stroke="#fff" stroke-width="0.8" stroke-linejoin="round"/></svg>
<svg style="left:511.9px;top:57.2px" width="15" height="15" viewBox="0 0 15 15"><rect x="2" y="0.2" width="12.2" height="4" fill="#a9b8a0"/><rect x="11" y="1.6" width="3.2" height="12.8" fill="#e6cf8a"/><rect x="11" y="6" width="3.2" height="8.4" fill="#8fae8a"/><rect x="0.2" y="3.2" width="11.4" height="11.2" fill="#1e1e1e"/><circle cx="5.8" cy="8.8" r="3.7" fill="#dfe3e6"/><circle cx="5.8" cy="8.8" r="1.2" fill="#5a5a5a"/></svg>
<svg style="left:511.9px;top:79.4px" width="15" height="13" viewBox="0 0 15 13"><rect x="4.2" y="0.4" width="10" height="8.2" fill="#1f35d8" stroke="#a9b3bd" stroke-width="0.9"/><path d="M6.4 4.4 L8.4 6.6 L12.2 2.2" fill="none" stroke="#fff" stroke-width="1.5"/><rect x="7.6" y="9" width="3.2" height="1.6" fill="#9aa6b0"/><rect x="5.4" y="10.6" width="7.6" height="1.4" fill="#c4ccd4"/><rect x="0.3" y="3.6" width="2.4" height="8.4" fill="#c9c9c9" stroke="#9a9a9a" stroke-width="0.4"/><rect x="0.9" y="4.4" width="1.2" height="1.2" fill="#3fd05a"/></svg>
<svg style="left:512.1px;top:98.1px" width="15" height="14" viewBox="0 0 15 14"><rect x="0" y="0" width="14.4" height="9" fill="#3aa9f3"/><polygon points="0,0 8,0 3,9 0,9" fill="#6cc4fa" opacity="0.7"/><rect x="4.4" y="4.6" width="4.6" height="2" rx="0.8" fill="#f1f1f1"/><rect x="1.9" y="5.8" width="10.6" height="7.6" rx="1.2" fill="#5d5d5d"/><rect x="1.9" y="5.8" width="10.6" height="2" rx="1" fill="#8a8a8a"/><rect x="3.6" y="8.8" width="2.2" height="2.8" fill="#f6f6f6"/><rect x="8.6" y="8.8" width="2.2" height="2.8" fill="#f6f6f6"/></svg>
<svg style="left:264.4px;top:105.4px" width="5" height="3" viewBox="0 0 5 3"><path d="M0 0 L4.8 0 L2.4 2.9 Z" fill="#2a2a2a"/></svg>
<svg style="left:339.4px;top:105.4px" width="5" height="3" viewBox="0 0 5 3"><path d="M0 0 L4.8 0 L2.4 2.9 Z" fill="#2a2a2a"/></svg>
<svg style="left:982px;top:645.6px" width="15" height="12" viewBox="0 0 15 12"><rect x="0.4" y="0.4" width="3.6" height="11.2" fill="#f4f4f4" stroke="#a8a8a8" stroke-width="0.6"/><rect x="1.4" y="1.6" width="1.6" height="1" fill="#9cc"/><rect x="1.4" y="5.2" width="1.6" height="1" fill="#69c"/><rect x="1.4" y="9" width="1.6" height="1" fill="#d66"/><g fill="#6a6a6a"><rect x="5.6" y="1.6" width="3.6" height="1"/><rect x="10.8" y="1.6" width="3.6" height="1"/><rect x="5.6" y="5.4" width="3.6" height="1"/><rect x="10.8" y="5.4" width="3.6" height="1"/><rect x="5.6" y="9.2" width="3.6" height="1"/><rect x="10.8" y="9.2" width="3.6" height="1"/></g></svg>
<svg style="left:1003px;top:646.2px" width="13" height="11" viewBox="0 0 13 11"><rect x="0.4" y="0.4" width="12" height="10" fill="#e9e9e9" stroke="#9a9a9a" stroke-width="0.7"/><rect x="1.8" y="1.8" width="9.2" height="7" fill="#5a9fe0"/><path d="M1.8 6 C4 4.4 7 5.6 11 7.6 L11 8.8 L1.8 8.8 Z" fill="#2f5f4f"/></svg>
<span class="tx" style="left:100.1px;top:6.0px;font-size:11px;line-height:16px;color:#fff;transform:scaleX(1.0186);">Этот компьютер</span>
<span class="tx" style="left:13.9px;top:31.0px;font-size:11px;line-height:16px;color:#fff;transform:scaleX(0.9276);">Файл</span>
<span class="tx" style="left:64.6px;top:31.0px;font-size:11px;line-height:16px;color:#2b2b2b;transform:scaleX(0.9910);">Компьютер</span>
<span class="tx" style="left:147.6px;top:31.0px;font-size:11px;line-height:16px;color:#2b2b2b;transform:scaleX(0.8973);">Вид</span>
<span class="tx" style="left:8.2px;top:87.0px;font-size:11px;line-height:16px;color:#1e1e1e;transform:scaleX(0.9211);">Свойства</span>
<span class="tx" style="left:58.0px;top:87.0px;font-size:11px;line-height:16px;color:#8f9092;transform:scaleX(0.9739);">Открыть</span>
<span class="tx" style="left:104.7px;top:87.0px;font-size:11px;line-height:16px;color:#8f9092;transform:scaleX(0.9703);">Переименовать</span>
<span class="tx" style="left:59.2px;top:117.0px;font-size:11px;line-height:16px;color:#5c5c5c;transform:scaleX(0.9756);">Расположение</span>
<span class="tx" style="left:211.7px;top:87.0px;font-size:11px;line-height:16px;color:#1e1e1e;transform:scaleX(0.9902);">Доступ к</span>
<span class="tx" style="left:196.9px;top:99.0px;font-size:11px;line-height:16px;color:#1e1e1e;transform:scaleX(0.9640);">мультимедиа</span>
<span class="tx" style="left:277.6px;top:87.0px;font-size:11px;line-height:16px;color:#1e1e1e;transform:scaleX(1.0009);">Подключить</span>
<span class="tx" style="left:273.2px;top:99.0px;font-size:11px;line-height:16px;color:#1e1e1e;transform:scaleX(0.9598);">сетевой диск</span>
<span class="tx" style="left:348.4px;top:87.0px;font-size:11px;line-height:16px;color:#1e1e1e;transform:scaleX(0.9611);">Добавить сетевое</span>
<span class="tx" style="left:355.6px;top:99.0px;font-size:11px;line-height:16px;color:#1e1e1e;transform:scaleX(0.9960);">расположение</span>
<span class="tx" style="left:306.2px;top:117.0px;font-size:11px;line-height:16px;color:#5c5c5c;transform:scaleX(0.9326);">Сеть</span>
<span class="tx" style="left:458.0px;top:87.0px;font-size:11px;line-height:16px;color:#1e1e1e;transform:scaleX(0.9882);">Открыть</span>
<span class="tx" style="left:451.5px;top:99.0px;font-size:11px;line-height:16px;color:#1e1e1e;transform:scaleX(0.9844);">параметры</span>
<span class="tx" style="left:529.4px;top:56.0px;font-size:11px;line-height:16px;color:#1e1e1e;transform:scaleX(0.9704);">Удалить или изменить программу</span>
<span class="tx" style="left:529.4px;top:76.0px;font-size:11px;line-height:16px;color:#1e1e1e;transform:scaleX(0.9365);">Свойства системы</span>
<span class="tx" style="left:529.4px;top:96.0px;font-size:11px;line-height:16px;color:#1e1e1e;transform:scaleX(0.9698);">Управление</span>
<span class="tx" style="left:554.2px;top:117.0px;font-size:11px;line-height:16px;color:#5c5c5c;transform:scaleX(0.9092);">Система</span>
<span class="tx" style="left:134.1px;top:145.0px;font-size:11px;line-height:16px;color:#000;transform:scaleX(1.0112);">Этот компьютер</span>
<span class="tx" style="left:864.1px;top:145.0px;font-size:11px;line-height:16px;color:#6d6d6d;transform:scaleX(1.0153);">Поиск: Этот компьютер</span>
<span class="tx" style="left:41.8px;top:191.0px;font-size:11px;line-height:16px;color:#000;transform:scaleX(0.9977);">Быстрый доступ</span>
<span class="tx" style="left:42.0px;top:220.0px;font-size:11px;line-height:16px;color:#000;transform:scaleX(0.9814);">OneDrive</span>
<span class="tx" style="left:41.8px;top:249.0px;font-size:11px;line-height:16px;color:#000;transform:scaleX(1.0100);">Этот компьютер</span>
<span class="tx" style="left:42.0px;top:278.0px;font-size:11px;line-height:16px;color:#000;transform:scaleX(0.9542);">Сеть</span>
<span class="tx" style="left:197.3px;top:180.0px;font-size:14px;line-height:20px;color:#1e3287;transform:scaleX(1.0058);-webkit-text-stroke:0;">Папки (7)</span>
<span class="tx" style="left:196.9px;top:358.0px;font-size:14px;line-height:20px;color:#1e3287;transform:scaleX(0.9883);-webkit-text-stroke:0;">Устройства и диски (4)</span>
<span class="tx" style="left:196.9px;top:486.0px;font-size:14px;line-height:20px;color:#1e3287;transform:scaleX(0.9889);-webkit-text-stroke:0;">Сетевые расположения (1)</span>
<span class="tx" style="left:242.7px;top:212.0px;font-size:11px;line-height:16px;color:#000;transform:scaleX(0.9680);">Видео</span>
<span class="tx" style="left:242.7px;top:263.0px;font-size:11px;line-height:16px;color:#000;transform:scaleX(1.0181);">Изображения</span>
<span class="tx" style="left:242.7px;top:315.0px;font-size:11px;line-height:16px;color:#000;transform:scaleX(1.0185);">Рабочий стол</span>
<span class="tx" style="left:476.1px;top:212.0px;font-size:11px;line-height:16px;color:#000;transform:scaleX(1.0354);">Документы</span>
<span class="tx" style="left:475.8px;top:263.0px;font-size:11px;line-height:16px;color:#000;transform:scaleX(1.0206);">Музыка</span>
<span class="tx" style="left:709.0px;top:212.0px;font-size:11px;line-height:16px;color:#000;transform:scaleX(1.0463);">Загрузки</span>
<span class="tx" style="left:709.1px;top:263.0px;font-size:11px;line-height:16px;color:#000;transform:scaleX(1.0042);">Объемные объекты</span>
<span class="tx" style="left:242.9px;top:384.0px;font-size:11px;line-height:16px;color:#000;transform:scaleX(1.0017);">Локальный диск (C:)</span>
<span class="tx" style="left:242.9px;top:413.0px;font-size:11px;line-height:16px;color:#6d6d6d;transform:scaleX(0.9475);">34,6 ГБ свободно из 99,4 ГБ</span>
<span class="tx" style="left:242.7px;top:442.0px;font-size:11px;line-height:16px;color:#000;transform:scaleX(0.9486);">DVD RW дисковод (G:)</span>
<span class="tx" style="left:476.0px;top:384.0px;font-size:11px;line-height:16px;color:#000;transform:scaleX(0.9998);">Локальный диск (D:)</span>
<span class="tx" style="left:476.0px;top:413.0px;font-size:11px;line-height:16px;color:#6d6d6d;transform:scaleX(0.9500);">59,6 ГБ свободно из 465 ГБ</span>
<span class="tx" style="left:709.3px;top:384.0px;font-size:11px;line-height:16px;color:#000;transform:scaleX(0.9872);">Локальный диск (E:)</span>
<span class="tx" style="left:708.7px;top:413.0px;font-size:11px;line-height:16px;color:#6d6d6d;transform:scaleX(0.9510);">170 ГБ свободно из 465 ГБ</span>
<span class="tx" style="left:242.9px;top:518.0px;font-size:11px;line-height:16px;color:#000;transform:scaleX(0.8517);">FTP</span>
<span class="tx" style="left:13.1px;top:645.0px;font-size:11px;line-height:16px;color:#1e395b;transform:scaleX(0.9669);">Элементов: 12</span>
</div>
</body>
</html>
